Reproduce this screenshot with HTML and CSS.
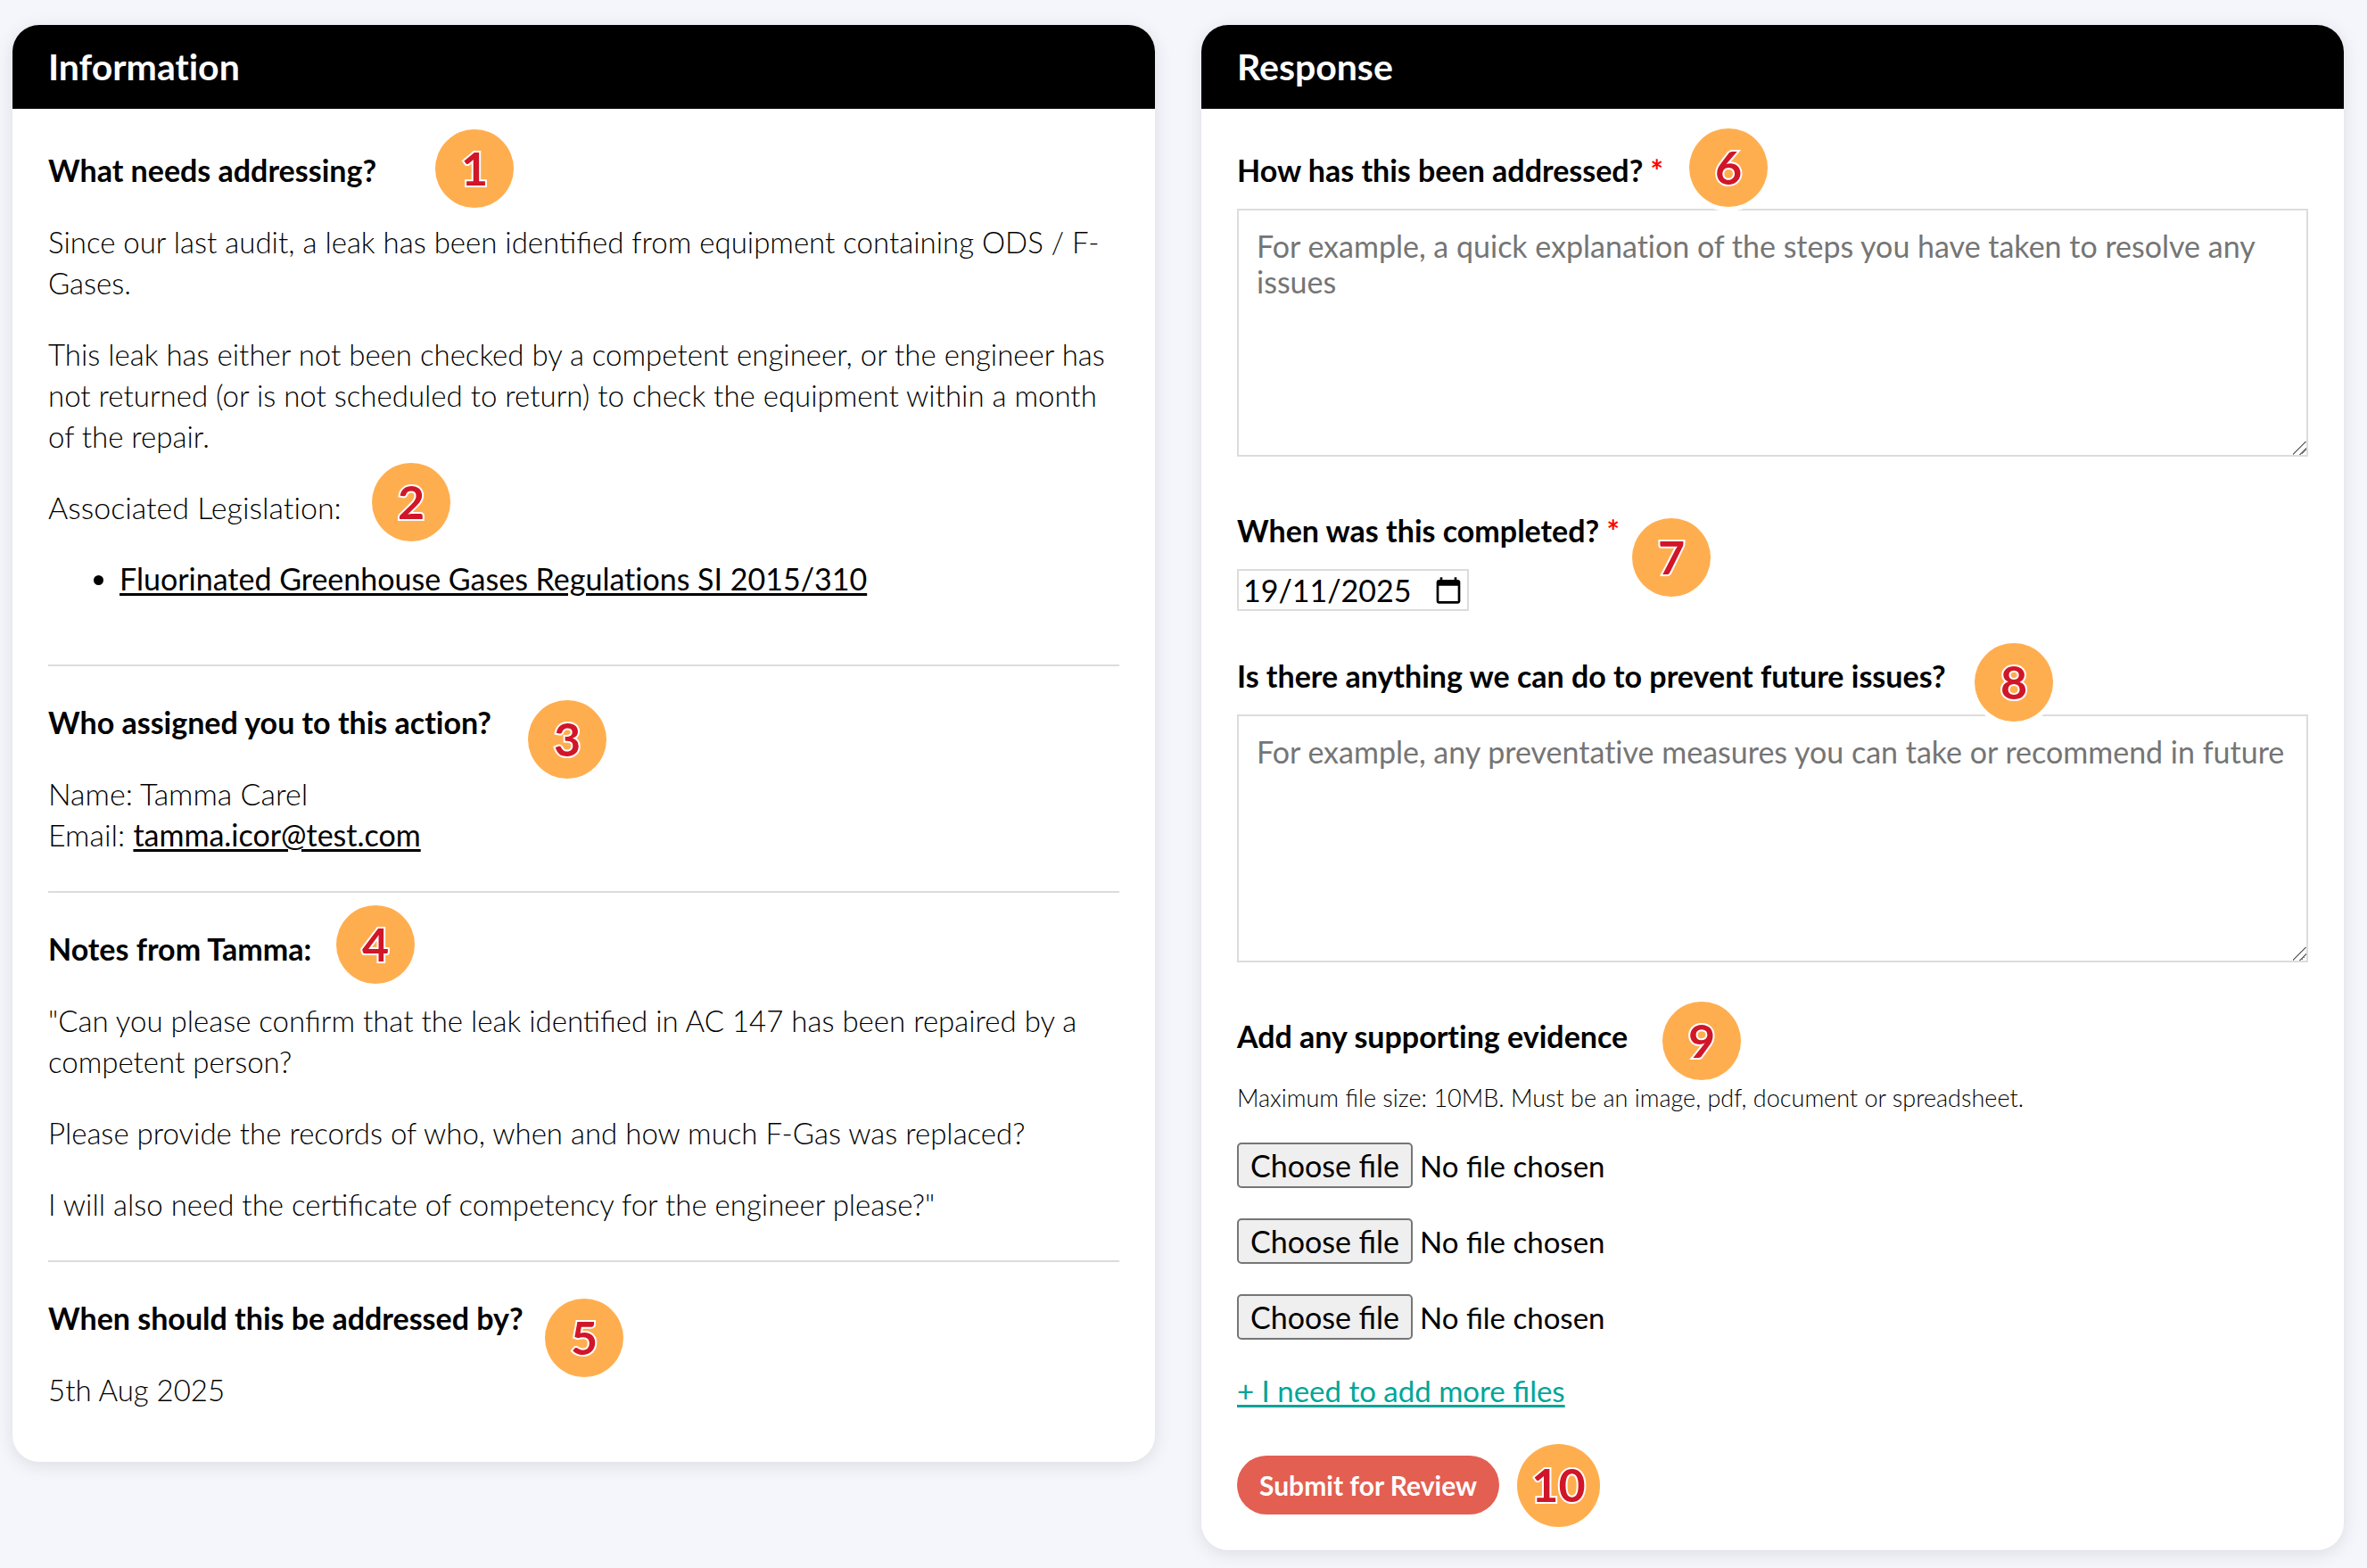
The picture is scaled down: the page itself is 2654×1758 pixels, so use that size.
FILE: index.html
```html
<!DOCTYPE html>
<html lang="en">
<head>
    <meta charset="UTF-8">
    <title>Action</title>
    <link rel="stylesheet" href="styles.css">
</head>
<body>
    <main class="columns">
        <section class="card">
            <h2 class="card-title">Information</h2>
            <div class="card-body info">
                <div class="block">
                    <h3>What needs addressing? <span class="pin pin-1">1</span></h3>
                    <p>Since our last audit, a leak has been identified from equipment containing ODS / F-Gases.</p>
                    <p>This leak has either not been checked by a competent engineer, or the engineer has not returned (or is not scheduled to return) to check the equipment within a month of the repair.</p>
                    <p class="detail">Associated Legislation: <span class="pin pin-2">2</span></p>
                    <ul>
                        <li><a href="#">Fluorinated Greenhouse Gases Regulations SI 2015/310</a></li>
                    </ul>
                </div>
                <div class="block">
                    <h3>Who assigned you to this action? <span class="pin pin-3">3</span></h3>
                    <p class="detail">Name: Tamma Carel<br>Email: <a href="mailto:tamma.icor@test.com">tamma.icor@test.com</a></p>
                </div>
                <div class="block">
                    <h3>Notes from Tamma: <span class="pin pin-4">4</span></h3>
                    <p>"Can you please confirm that the leak identified in AC 147 has been repaired by a competent person?</p>
                    <p>Please provide the records of who, when and how much F-Gas was replaced?</p>
                    <p>I will also need the certificate of competency for the engineer please?"</p>
                </div>
                <div class="block">
                    <h3>When should this be addressed by? <span class="pin pin-5">5</span></h3>
                    <p>5th Aug 2025</p>
                </div>
            </div>
        </section>

        <section class="card">
            <h2 class="card-title">Response</h2>
            <form class="card-body response">
                <div class="field">
                    <label for="addressed">How has this been addressed? <span class="required">*</span></label>
                    <span class="pin pin-6">6</span>
                    <textarea id="addressed" placeholder="For example, a quick explanation of the steps you have taken to resolve any issues"></textarea>
                </div>
                <div class="field date-field">
                    <label for="completed">When was this completed? <span class="required">*</span></label>
                    <span class="pin pin-7">7</span>
                    <div class="date-box">
                        <input id="completed" type="text" value="19/11/2025">
                        <svg width="32" height="32" viewBox="0 0 24 24" aria-hidden="true"><path d="M20 3h-1V1h-2v2H7V1H5v2H4c-1.100 0-2 .9-2 2v16c0 1.100.9 2 2 2h16c1.100 0 2-.9 2-2V5c0-1.100-.9-2-2-2zm0 18H4V8h16v13z"/></svg>
                    </div>
                </div>
                <div class="field">
                    <label for="prevent">Is there anything we can do to prevent future issues?</label>
                    <span class="pin pin-8">8</span>
                    <textarea id="prevent" placeholder="For example, any preventative measures you can take or recommend in future"></textarea>
                </div>
                <div class="field files">
                    <label for="file1">Add any supporting evidence</label>
                    <span class="pin pin-9">9</span>
                    <p class="hint">Maximum file size: 10MB. Must be an image, pdf, document or spreadsheet.</p>
                    <div class="file"><button type="button" id="file1">Choose file</button><span>No file chosen</span></div>
                    <div class="file"><button type="button">Choose file</button><span>No file chosen</span></div>
                    <div class="file"><button type="button">Choose file</button><span>No file chosen</span></div>
                    <a class="more" href="#">+ I need to add more files</a>
                </div>
                <div class="actions">
                    <button class="submit" type="submit">Submit for Review</button>
                    <span class="pin pin-10">10</span>
                </div>
            </form>
        </section>
    </main>
</body>
</html>
```
FILE: styles.css
```css
* {
    box-sizing: border-box;
}

body {
    margin: 0;
    background: #f4f6fb;
    color: #000;
    font-family: Lato, sans-serif;
    font-size: 33px;
    line-height: 46px;
    font-variant-ligatures: none;
}

.columns {
    display: grid;
    grid-template-columns: 1fr 1fr;
    align-items: start;
    gap: 52px;
    padding: 28px 26px 20px 14px;
}

.card {
    background: #fff;
    border-radius: 30px;
    box-shadow: 0 4px 20px rgba(0, 0, 0, 0.1);
}

.card-title {
    margin: 0;
    padding: 24px 40px;
    border-radius: 30px 30px 0 0;
    background: #000;
    color: #fff;
    font-size: 41px;
    font-weight: bold;
}

.card-body {
    padding: 46px 40px 40px;
}

a {
    color: #000;
    font-size: 34px;
    font-weight: 400;
    text-decoration-thickness: 3px;
    text-underline-offset: 3px;
}

h3,
label {
    display: block;
    margin: 0;
    font-size: 34px;
    font-weight: bold;
}

/* information */

.info {
    padding-bottom: 58px;
    font-weight: 300;
}

.block + .block {
    margin-top: 40px;
    padding-top: 40px;
    border-top: 2px solid #dcdcdc;
}

.block h3,
.detail {
    position: relative;
}

.block p {
    margin: 34px 0 0;
    font-variant-ligatures: normal;
}

.block p.detail {
    font-size: 34px;
    font-variant-ligatures: none;
}

.block ul {
    margin: 34px 0 0;
    padding: 0 0 33px 80px;
}

/* response */

.field,
.actions {
    position: relative;
}

.field {
    margin-bottom: 60px;
}

.required {
    color: #f00;
}

input,
textarea,
button {
    margin: 0;
    color: #000;
    font-family: inherit;
    font-size: 34px;
    font-variant-ligatures: inherit;
}

textarea {
    display: block;
    width: 100%;
    height: 278px;
    margin-top: 20px;
    padding: 20px;
    border: 2px solid #dcdcdc;
    background: #fff;
    line-height: 40px;
    resize: vertical;
}

textarea::placeholder {
    color: #757575;
}

textarea::-webkit-resizer {
    background: linear-gradient(135deg, transparent 46%, #777 46% 53%, transparent 53% 73%, #777 73% 80%, transparent 80%);
}

.date-field {
    margin-bottom: 50px;
}

.date-box {
    display: flex;
    align-items: center;
    justify-content: space-between;
    width: 260px;
    height: 47px;
    margin-top: 20px;
    padding: 0 5px;
    border: 2px solid #dcdcdc;
}

.date-box input {
    width: 200px;
    padding: 0;
    border: none;
    line-height: 42px;
}

.files {
    margin-bottom: 50px;
}

.hint {
    margin: 27px 0 31px;
    font-size: 27px;
    font-weight: 300;
    line-height: 38px;
    font-variant-ligatures: normal;
}

.file {
    display: flex;
    align-items: center;
    gap: 8px;
    margin-bottom: 34px;
    font-variant-ligatures: normal;
}

.file button {
    height: 51px;
    padding: 0 13px;
    border: 2px solid #767676;
    border-radius: 5px;
    background: #efefef;
}

.more {
    display: block;
    width: fit-content;
    color: #00a599;
    font-size: 33px;
    font-variant-ligatures: normal;
}

.submit {
    display: block;
    height: 66px;
    padding: 0 25px;
    border: none;
    border-radius: 33px;
    background: #e35f52;
    color: #fff;
    font-size: 30px;
    font-weight: bold;
}

/* numbered markers */

.pin {
    position: absolute;
    width: 88px;
    height: 88px;
    border-radius: 50%;
    background: #ffae4f;
    box-shadow: 0 0 0 5px #fff;
    color: #d01628;
    font-size: 52px;
    font-weight: bold;
    line-height: 86px;
    text-align: center;
    -webkit-text-stroke: 4px #fff;
    paint-order: stroke fill;
}

.pin-1 { left: 434px; top: -23px; }
.pin-2 { left: 363px; top: -27px; }
.pin-3 { left: 538px; top: -2px; }
.pin-4 { left: 323px; top: -26px; }
.pin-5 { left: 557px; top: 1px; }
.pin-6 { left: 507px; top: -24px; }
.pin-7 { left: 443px; top: 9px; }
.pin-8 { left: 827px; top: -14px; }
.pin-9 { left: 477px; top: -16px; }

.pin-10 {
    left: 314px;
    top: -13px;
    width: 93px;
    height: 93px;
    line-height: 91px;
}
```
